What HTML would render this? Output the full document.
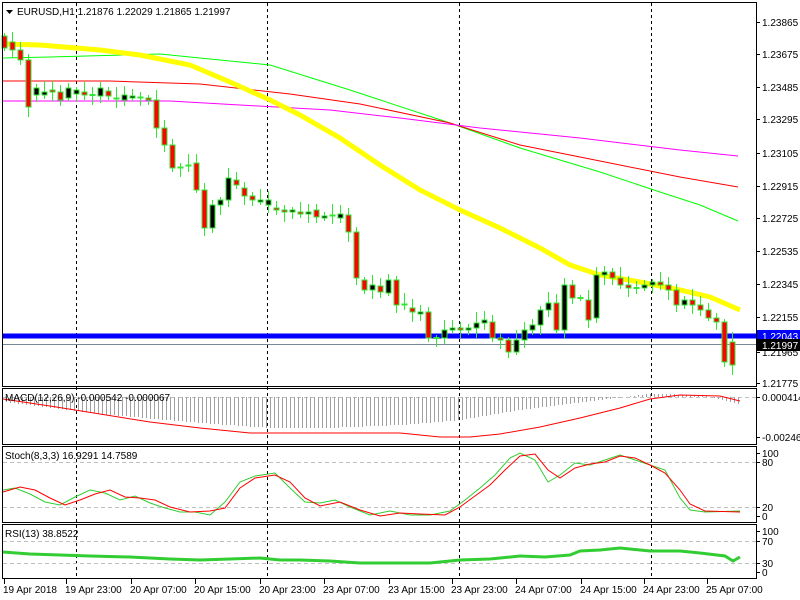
<!DOCTYPE html>
<html><head><meta charset="utf-8"><style>
html,body{margin:0;padding:0;background:#fff;width:800px;height:600px;overflow:hidden}
svg{display:block;font-family:"Liberation Sans",sans-serif;font-size:10px}
</style></head><body>
<svg id="s" width="800" height="600" xmlns="http://www.w3.org/2000/svg">
<rect width="800" height="600" fill="#fff"/>
<g id="grid" stroke="#000" stroke-dasharray="3,3" stroke-width="1">
<line x1="76.5" y1="3" x2="76.5" y2="578"/><line x1="267.5" y1="3" x2="267.5" y2="578"/>
<line x1="459.5" y1="3" x2="459.5" y2="578"/><line x1="651.5" y1="3" x2="651.5" y2="578"/>
</g>
<g stroke="#c0c0c0" stroke-dasharray="4,3">
<line x1="3" y1="397.5" x2="756" y2="397.5"/>
<line x1="3" y1="462.5" x2="756" y2="462.5"/><line x1="3" y1="507.5" x2="756" y2="507.5"/>
<line x1="3" y1="541.5" x2="756" y2="541.5"/><line x1="3" y1="563.5" x2="756" y2="563.5"/>
</g>
<polyline fill="none" stroke="#00ff00" stroke-width="1" points="3,58 50,57 160,54 270,65 350,90 450,123 520,148 600,172 660,192 700,205 738,221"/>
<polyline fill="none" stroke="#ff0000" stroke-width="1" points="3,81 110,81 200,84 290,94 360,104 450,123 520,145 600,161 680,177 738,187"/>
<polyline fill="none" stroke="#ff00ff" stroke-width="1" points="3,101 170,101 240,105 330,110 400,118 480,128 580,138 680,150 738,156"/>
<polyline fill="none" stroke="#ffff00" stroke-width="5" points="3,44 40,45 100,50 140,55 190,65 230,82 270,100 300,115 340,138 380,165 420,190 460,210 500,228 540,248 570,265 600,275 640,282 680,290 710,297 740,310"/>
<line x1="3" y1="336" x2="757" y2="336" stroke="#0000ff" stroke-width="5"/>
<line x1="3" y1="344.5" x2="757" y2="344.5" stroke="#778899" stroke-width="1"/>
<g id="c"></g>
<g id="h" stroke="#a0a0a0"></g>
<polyline fill="none" stroke="#ff0000" points="3,399 50,406 100,414 150,422 200,428 250,433 270,433 330,433 400,433 440,437 470,437 500,434 540,427 580,418 620,408 650,399 680,395 720,396 740,401"/>
<polyline fill="none" stroke="#32cd32" points="3,490 15,488 30,494 45,502 60,505 75,497 90,490 105,493 120,500 135,496 150,503 165,508 180,512 195,512 210,515 225,502 240,482 255,476 275,473 290,488 305,502 320,503 335,500 350,507 370,515 390,511 410,515 430,515 450,511 465,500 480,488 495,475 510,458 520,453 535,460 548,482 560,475 575,463 590,465 605,460 620,455 635,460 650,465 665,470 680,498 690,510 705,512 740,511"/>
<polyline fill="none" stroke="#ff0000" points="3,492 20,487 35,490 50,498 65,505 80,500 95,494 110,490 125,497 140,498 155,500 170,507 190,512 210,511 225,508 240,488 255,478 275,475 290,482 305,498 320,506 340,502 360,510 380,516 400,513 420,514 445,515 460,507 475,496 490,485 505,470 520,456 535,454 548,470 560,478 575,468 590,464 605,462 620,456 635,458 650,465 665,473 680,490 690,504 705,511 740,512"/>
<polyline fill="none" stroke="#32cd32" stroke-width="3" points="3,552 30,554 60,555 90,556 130,557 170,559 200,560 230,559 260,558 280,560 300,560 330,561 360,563 400,563 430,563 460,560 490,559 520,556 545,557 570,555 580,551 600,550 620,548 650,551 680,551 700,553 725,556 733,561 740,557"/>
<g fill="none" stroke="#000" stroke-width="1">
<rect x="2.5" y="2.5" width="754" height="384"/><rect x="2.5" y="388.5" width="754" height="56"/>
<rect x="2.5" y="446.5" width="754" height="76"/><rect x="2.5" y="524.5" width="754" height="54"/>
</g>
<g id="t" fill="#000"></g>
<polygon points="6,10 13,10 9.5,14" fill="#000"/>
<text x="17" y="15">EURUSD,H1  1.21876 1.22029 1.21865 1.21997</text>
<text x="5" y="401">MACD(12,26,9) -0.000542 -0.000067</text>
<text x="5" y="459">Stoch(8,3,3) 16.9291 14.7589</text>
<text x="5" y="537">RSI(13) 38.8522</text>
<rect x="757" y="330" width="43" height="13" fill="#0000ff"/>
<text x="762" y="340" fill="#fff">1.22043</text>
<rect x="757" y="339" width="43" height="12" fill="#000"/>
<text x="762" y="349" fill="#fff">1.21997</text>
</svg>
<script>
var ys=[[36,48],[42,50],[50,60],[60,107],[95,88],[95,92],[90,92],[92,100],[98,88],[94,90],[92,95],[95,95],[96,88],[91,96],[98,99],[100,95],[98,96],[98,97],[98,100],[100,128],[128,145],[145,168],[168,167],[166,165],[163,190],[190,228],[228,205],[205,200],[200,178],[180,185],[188,196],[196,200],[202,200],[205,200],[208,210],[210,212],[212,210],[212,214],[214,212],[210,217],[218,216],[216,215],[218,214],[215,232],[232,278],[280,290],[290,285],[286,292],[293,280],[280,305],[305,304],[308,312],[314,312],[312,338],[338,338],[338,330],[330,328],[328,330],[330,328],[328,323],[323,320],[322,338],[338,340],[340,352],[352,340],[340,330],[330,325],[325,310],[310,303],[303,330],[330,285],[285,298],[298,298],[300,320],[318,275],[275,272],[272,278],[278,285],[285,288],[288,288],[288,285],[285,282],[282,285],[285,290],[290,305],[305,300],[300,305],[305,310],[310,318],[318,322],[322,362],[342,365]];
var g='',x0=4,sp=8;
ys.forEach(function(c,i){var x=x0+i*sp+0.5,o=c[0],cl=c[1],t=Math.min(o,cl),b=Math.max(o,cl);
var hi=t-3-((i*7)%9),lo=b+3+((i*5)%8);
g+='<line x1="'+x+'" y1="'+hi+'" x2="'+x+'" y2="'+lo+'" stroke="#32e632"/>';
if(b-t<1)g+='<line x1="'+(x-3)+'" y1="'+t+'" x2="'+(x+3)+'" y2="'+t+'" stroke="#32e632" stroke-width="2"/>';
else g+='<rect x="'+(x-2.5)+'" y="'+t+'" width="5" height="'+(b-t)+'" fill="'+(cl>o?'#ff0000':'#000')+'" stroke="#32e632"/>';});
document.getElementById('c').innerHTML=g;
var h='';for(var x=6;x<740;x+=4){var v;var px=[[3,402],[100,414],[200,423],[270,428],[330,428],[400,425],[460,420],[520,410],[600,400],[650,394],[700,395],[740,404]];
for(var k=0;k<px.length-1;k++)if(x>=px[k][0]&&x<=px[k+1][0]){v=px[k][1]+(px[k+1][1]-px[k][1])*(x-px[k][0])/(px[k+1][0]-px[k][0]);}
h+='<line x1="'+x+'.5" y1="397" x2="'+x+'.5" y2="'+v.toFixed(0)+'"/>';}
document.getElementById('h').innerHTML=h;
var t='',pl=[["1.23865",22],["1.23675",54],["1.23485",87],["1.23295",119],["1.23105",153],["1.22915",186],["1.22725",218],["1.22535",251],["1.22345",284],["1.22155",317],["1.21965",352],["1.21775",383],["0.000414",397],["-0.002469",437],["100",453],["80",462],["20",507],["0",516],["100",531],["70",541],["30",563],["0",572]];
pl.forEach(function(p){t+='<line x1="757" y1="'+p[1]+'.5" x2="760" y2="'+p[1]+'.5" stroke="#000"/><text x="762" y="'+(p[1]+4)+'">'+p[0]+'</text>';});
var bl=[["19 Apr 2018",3],["19 Apr 23:00",65],["20 Apr 07:00",130],["20 Apr 15:00",194],["20 Apr 23:00",259],["23 Apr 07:00",323],["23 Apr 15:00",388],["23 Apr 23:00",451],["24 Apr 07:00",515],["24 Apr 15:00",580],["24 Apr 23:00",643],["25 Apr 07:00",706]];
bl.forEach(function(b,i){t+='<line x1="'+(b[1]+1)+'.5" y1="579" x2="'+(b[1]+1)+'.5" y2="584" stroke="#000"/><text x="'+b[1]+'" y="593">'+b[0]+'</text>';});
document.getElementById('t').innerHTML=t;
</script>
</body></html>
